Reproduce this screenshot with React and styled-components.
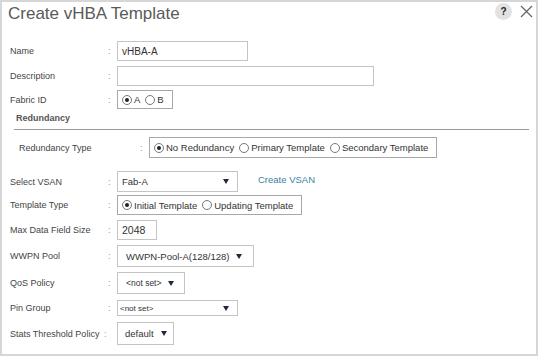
import React from 'react';
import styled, { createGlobalStyle } from 'styled-components';

const GlobalStyle = createGlobalStyle`
  html, body { margin: 0; padding: 0; background: #fff; }
  body { font-family: 'Liberation Sans', Arial, sans-serif; }
`;

export default function App() {
  return (
    <>
      <GlobalStyle />
      <Dialog>
        <Header>
          <Title>Create vHBA Template</Title>
          <Actions>
            <Help>?</Help>
            <Close>
              <svg width="13" height="13" viewBox="0 0 13 13">
                <path d="M1 1 L12 12 M12 1 L1 12" stroke="#666" strokeWidth="1.3" fill="none" />
              </svg>
            </Close>
          </Actions>
        </Header>

        <Form>
          <Row $h={20} $mt={0}>
            <Label>Name</Label>
            <Colon>:</Colon>
            <Input $w={131}>vHBA-A</Input>
          </Row>
          <Row $h={20} $mt={5}>
            <Label>Description</Label>
            <Colon>:</Colon>
            <Input $w={257} />
          </Row>
          <Row $h={19} $mt={4}>
            <Label>Fabric ID</Label>
            <Colon>:</Colon>
            <RadioGroup>
              <Radio checked label="A" />
              <Radio label="B" />
            </RadioGroup>
          </Row>

          <Section>Redundancy</Section>
          <Divider />

          <Row $h={21} $mt={7} $indent>
            <Label $w={121}>Redundancy Type</Label>
            <Colon>:</Colon>
            <RadioGroup>
              <Radio checked label="No Redundancy" />
              <Radio label="Primary Template" />
              <Radio label="Secondary Template" />
            </RadioGroup>
          </Row>

          <Row $h={21} $mt={13}>
            <Label>Select VSAN</Label>
            <Colon>:</Colon>
            <Select $w={121} $pl={4}>
              <span>Fab-A</span>
              <Arrow />
            </Select>
            <Link>Create VSAN</Link>
          </Row>
          <Row $h={20} $mt={3}>
            <Label>Template Type</Label>
            <Colon>:</Colon>
            <RadioGroup>
              <Radio checked label="Initial Template" />
              <Radio label="Updating Template" />
            </RadioGroup>
          </Row>
          <Row $h={20} $mt={5}>
            <Label>Max Data Field Size</Label>
            <Colon>:</Colon>
            <Input $w={40} $fs={10.5}>2048</Input>
          </Row>
          <Row $h={22} $mt={5}>
            <Label>WWPN Pool</Label>
            <Colon>:</Colon>
            <Select $w={137} $pl={8} $gap>
              <span>WWPN-Pool-A(128/128)</span>
              <Arrow />
            </Select>
          </Row>
          <Row $h={22} $mt={5}>
            <Label>QoS Policy</Label>
            <Colon>:</Colon>
            <Select $w={68} $pl={8} $gap $fs={8.5}>
              <span>&lt;not set&gt;</span>
              <Arrow />
            </Select>
          </Row>
          <Row $h={16} $mt={6}>
            <Label>Pin Group</Label>
            <Colon>:</Colon>
            <Select $w={121} $pl={2} $fs={8}>
              <span>&lt;not set&gt;</span>
              <Arrow />
            </Select>
          </Row>
          <Row $h={23} $mt={6}>
            <Label>Stats Threshold Policy</Label>
            <Colon $tight>:</Colon>
            <Select $w={57} $pl={7} $gap>
              <span>default</span>
              <Arrow />
            </Select>
          </Row>
        </Form>
      </Dialog>
    </>
  );
}

function Radio({ checked, label }) {
  return (
    <RadioItem>
      <Circle $checked={checked} />
      <span>{label}</span>
    </RadioItem>
  );
}

const Dialog = styled.div`
  box-sizing: border-box;
  width: 538px;
  height: 356px;
  border: 2px solid #d6d6d6;
  background: #fff;
  color: #444;
`;

const Header = styled.div`
  display: flex;
  justify-content: space-between;
  align-items: flex-start;
  height: 39px;
  padding: 0 0 0 6px;
`;

const Title = styled.div`
  font-size: 17px;
  line-height: 22px;
  padding-top: 1px;
  color: #5a5a5a;
`;

const Actions = styled.div`
  display: flex;
  align-items: center;
  gap: 8px;
  padding: 1px 3px 0 0;
`;

const Help = styled.div`
  width: 17px;
  height: 17px;
  border-radius: 50%;
  background: #e2e2e2;
  color: #222;
  font-size: 10px;
  font-weight: bold;
  display: flex;
  align-items: center;
  justify-content: center;
`;

const Close = styled.div`
  display: flex;
  width: 13px;
  height: 13px;
`;

const Form = styled.div`
  display: flex;
  flex-direction: column;
  padding-left: 8px;
`;

const Row = styled.div`
  display: flex;
  align-items: center;
  height: ${({ $h }) => $h}px;
  margin-top: ${({ $mt }) => $mt}px;
  padding-left: ${({ $indent }) => ($indent ? 9 : 0)}px;
`;

const Label = styled.div`
  width: ${({ $w }) => $w || 98}px;
  font-size: 9px;
  color: #444;
  white-space: nowrap;
`;

const Colon = styled.div`
  width: 9px;
  margin-left: ${({ $tight }) => ($tight ? -4 : 0)}px;
  padding-right: ${({ $tight }) => ($tight ? 4 : 0)}px;
  font-size: 9px;
  color: #999;
`;

const Input = styled.div`
  box-sizing: border-box;
  width: ${({ $w }) => $w}px;
  height: 100%;
  border: 1px solid #c4c4c4;
  padding-left: 4px;
  display: flex;
  align-items: center;
  font-size: ${({ $fs }) => $fs || 10}px;
  color: #333;
`;

const RadioGroup = styled.div`
  box-sizing: border-box;
  height: 100%;
  border: 1px solid #a8a8a8;
  display: flex;
  align-items: center;
  gap: 5px;
  padding: 0 8px 0 4px;
`;

const RadioItem = styled.div`
  display: flex;
  align-items: center;
  gap: 2px;
  font-size: 9.5px;
  color: #333;
`;

const Circle = styled.span`
  box-sizing: border-box;
  width: 10px;
  height: 10px;
  border-radius: 50%;
  border: 1px solid #777;
  display: inline-flex;
  align-items: center;
  justify-content: center;
  &::after {
    content: '';
    width: 4px;
    height: 4px;
    border-radius: 50%;
    background: ${({ $checked }) => ($checked ? '#222' : 'transparent')};
  }
`;

const Section = styled.div`
  margin: 3px 0 0 6px;
  font-size: 9px;
  font-weight: bold;
  color: #555;
  line-height: 12px;
`;

const Divider = styled.div`
  margin: 5px 0 0 4px;
  width: 515px;
  height: 1px;
  background: #999;
`;

const Select = styled.div`
  box-sizing: border-box;
  width: ${({ $w }) => $w}px;
  height: 100%;
  border: 1px solid #c4c4c4;
  padding: 0 8px 0 ${({ $pl }) => $pl}px;
  display: flex;
  align-items: center;
  justify-content: ${({ $gap }) => ($gap ? 'flex-start' : 'space-between')};
  gap: 7px;
  font-size: ${({ $fs }) => $fs || 9.5}px;
  color: #333;
`;

const Arrow = styled.span`
  width: 0;
  height: 0;
  border-left: 3px solid transparent;
  border-right: 3px solid transparent;
  border-top: 5px solid #1e2a3a;
`;

const Link = styled.span`
  margin: -4px 0 0 20px;
  font-size: 9.5px;
  color: #3c7fa6;
`;
